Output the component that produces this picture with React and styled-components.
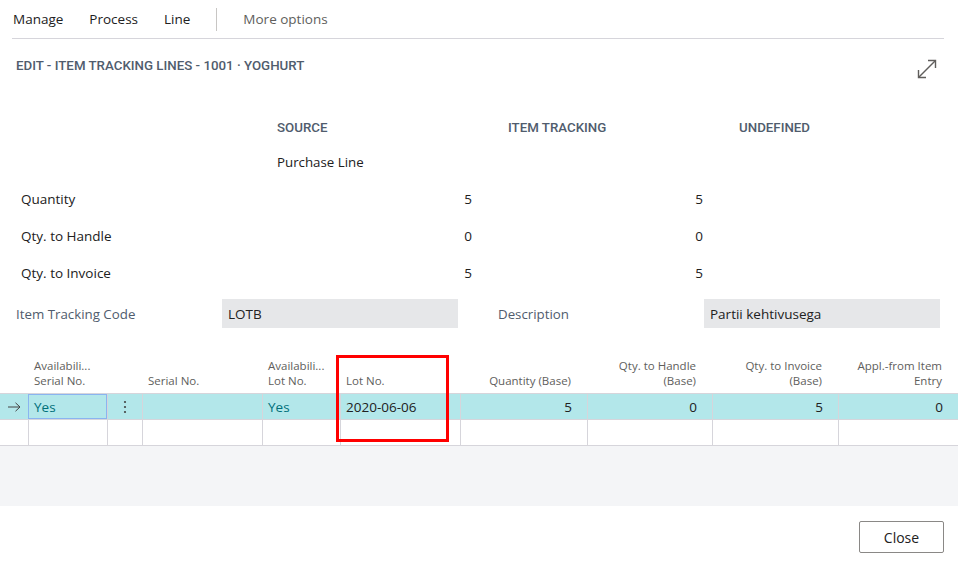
import styled, { createGlobalStyle } from 'styled-components';

const GlobalStyle = createGlobalStyle`
  html, body {
    margin: 0;
    padding: 0;
    background: #ffffff;
  }
  body {
    font-family: 'Open Sans', 'Noto Sans', Arial, sans-serif;
    color: #212121;
  }
`;

const columns = [
  { key: 'arrow', width: 28 },
  { key: 'availSerial', width: 79, title: ['Availabili...', 'Serial No.'] },
  { key: 'menu', width: 35 },
  { key: 'serial', width: 120, title: ['Serial No.'] },
  { key: 'availLot', width: 78, title: ['Availabili...', 'Lot No.'] },
  { key: 'lot', width: 120, title: ['Lot No.'] },
  { key: 'qty', width: 127, title: ['Quantity (Base)'], right: true },
  { key: 'handle', width: 125, title: ['Qty. to Handle', '(Base)'], right: true },
  { key: 'invoice', width: 126, title: ['Qty. to Invoice', '(Base)'], right: true },
  { key: 'appl', width: 120, title: ['Appl.-from Item', 'Entry'], right: true },
];

const gridTemplate = columns.map(c => `${c.width}px`).join(' ');

const rowData = {
  availSerial: 'Yes',
  serial: '',
  availLot: 'Yes',
  lot: '2020-06-06',
  qty: '5',
  handle: '0',
  invoice: '5',
  appl: '0',
};

export default function App() {
  return (
    <Page>
      <GlobalStyle />
      <Toolbar>
        <ToolItem>Manage</ToolItem>
        <ToolItem>Process</ToolItem>
        <ToolItem>Line</ToolItem>
        <ToolSeparator />
        <ToolItem $muted>More options</ToolItem>
      </Toolbar>

      <TitleBar>
        <Caption>Edit - Item Tracking Lines - 1001 · Yoghurt</Caption>
        <ExpandButton aria-label="Expand">
          <svg width="24" height="24" viewBox="0 0 24 24" fill="none" stroke="#605e5c" strokeWidth="1.4">
            <line x1="3.5" y1="20.5" x2="20.5" y2="3.5" />
            <polyline points="13,3.5 20.5,3.5 20.5,11" />
            <polyline points="3.5,13 3.5,20.5 11,20.5" />
          </svg>
        </ExpandButton>
      </TitleBar>

      <Summary>
        <SummaryRow $height={34}>
          <span />
          <GroupHead>Source</GroupHead>
          <GroupHead>Item Tracking</GroupHead>
          <GroupHead>Undefined</GroupHead>
        </SummaryRow>
        <SummaryRow $height={37}>
          <span />
          <SourceText>Purchase Line</SourceText>
          <span />
          <span />
        </SummaryRow>
        <SummaryRow $height={37}>
          <RowLabel>Quantity</RowLabel>
          <Amount>5</Amount>
          <Amount>5</Amount>
          <span />
        </SummaryRow>
        <SummaryRow $height={37}>
          <RowLabel>Qty. to Handle</RowLabel>
          <Amount>0</Amount>
          <Amount>0</Amount>
          <span />
        </SummaryRow>
        <SummaryRow $height={20}>
          <RowLabel>Qty. to Invoice</RowLabel>
          <Amount>5</Amount>
          <Amount>5</Amount>
          <span />
        </SummaryRow>
      </Summary>

      <FieldRow>
        <FieldLabel>Item Tracking Code</FieldLabel>
        <FieldValue>LOTB</FieldValue>
        <span />
        <FieldLabel>Description</FieldLabel>
        <FieldValue>Partii kehtivusega</FieldValue>
      </FieldRow>

      <GridWrap>
        <HeaderRow>
          {columns.map(c => (
            <HeadCell key={c.key} $right={c.right}>
              {c.title && c.title.map(t => <HeadLine key={t}>{t}</HeadLine>)}
            </HeadCell>
          ))}
        </HeaderRow>
        <BodyRow $selected>
          {columns.map((c, i) => {
            if (c.key === 'arrow') {
              return (
                <Cell key={c.key} $first>
                  <svg width="14" height="10" viewBox="0 0 14 10" fill="none" stroke="#444" strokeWidth="1">
                    <line x1="1" y1="5" x2="13" y2="5" />
                    <polyline points="8.5,0.8 13,5 8.5,9.2" />
                  </svg>
                </Cell>
              );
            }
            if (c.key === 'menu') {
              return (
                <Cell key={c.key} $center>
                  <svg width="4" height="14" viewBox="0 0 4 14" fill="#444">
                    <circle cx="2" cy="2" r="1.1" />
                    <circle cx="2" cy="7" r="1.1" />
                    <circle cx="2" cy="12" r="1.1" />
                  </svg>
                </Cell>
              );
            }
            const v = rowData[c.key];
            const link = v === 'Yes';
            return (
              <Cell key={c.key} $right={c.right} $focus={i === 1} $link={link}>
                {v}
              </Cell>
            );
          })}
        </BodyRow>
        <BodyRow>
          {columns.map((c, i) => (
            <Cell key={c.key} $first={i === 0} />
          ))}
        </BodyRow>
        <Highlight />
      </GridWrap>

      <EmptyArea />

      <Footer>
        <CloseButton>Close</CloseButton>
      </Footer>
    </Page>
  );
}

const Page = styled.div`
  width: 958px;
  height: 561px;
  overflow: hidden;
  font-size: 14px;
`;

const Toolbar = styled.div`
  height: 38px;
  margin: 0 14px 0 12px;
  padding-left: 1px;
  display: flex;
  align-items: center;
  gap: 26px;
  border-bottom: 1px solid #d6d5db;
`;

const ToolItem = styled.span`
  font-size: 13.5px;
  color: ${p => (p.$muted ? '#605e5c' : '#212121')};
  white-space: nowrap;
`;

const ToolSeparator = styled.span`
  width: 1px;
  height: 23px;
  background: #c8c6c4;
`;

const TitleBar = styled.div`
  height: 79px;
  display: flex;
  justify-content: space-between;
  align-items: flex-start;
  padding: 17px 19px 0 16px;
  box-sizing: border-box;
`;

const Caption = styled.h1`
  margin: 0;
  font-family: Roboto, 'Liberation Sans', sans-serif;
  font-size: 13.3px;
  line-height: 20px;
  font-weight: 500;
  text-transform: uppercase;
  color: #505c6d;
`;

const ExpandButton = styled.button`
  background: none;
  border: none;
  padding: 0;
  margin-top: 1px;
  width: 24px;
  height: 24px;
  cursor: pointer;
`;

const Summary = styled.div`
  padding-left: 21px;
`;

const SummaryRow = styled.div`
  display: grid;
  grid-template-columns: 225px 231px 231px 231px;
  height: ${p => p.$height}px;
  align-items: start;
  line-height: 20px;
`;

const GroupHead = styled.div`
  padding-left: 31px;
  font-family: Roboto, 'Liberation Sans', sans-serif;
  font-size: 13.3px;
  font-weight: 500;
  text-transform: uppercase;
  color: #505c6d;
`;

const SourceText = styled.div`
  padding-left: 31px;
  font-size: 13.3px;
`;

const RowLabel = styled.div`
  font-size: 13.5px;
  color: #212121;
`;

const Amount = styled.div`
  text-align: right;
  padding-right: 5px;
  font-size: 13.5px;
`;

const FieldRow = styled.div`
  margin-top: 16px;
  padding-left: 16px;
  display: grid;
  grid-template-columns: 206px 236px 40px 206px 236px;
  height: 29px;
`;

const FieldLabel = styled.div`
  display: flex;
  align-items: center;
  font-size: 13.3px;
  color: #505c6d;
`;

const FieldValue = styled.div`
  display: flex;
  align-items: center;
  padding-left: 6px;
  background: #e6e7e9;
  font-size: 13.5px;
  color: #212121;
`;

const GridWrap = styled.div`
  position: relative;
  margin-top: 17px;
`;

const HeaderRow = styled.div`
  display: grid;
  grid-template-columns: ${gridTemplate};
  height: 49px;
  border-bottom: 1px solid #d6d5db;
  box-sizing: border-box;
`;

const HeadCell = styled.div`
  display: flex;
  flex-direction: column;
  justify-content: flex-end;
  align-items: ${p => (p.$right ? 'flex-end' : 'flex-start')};
  padding: 0 ${p => (p.$right ? '16px' : '6px')} 5px 6px;
  font-size: 11.5px;
  color: #605e5c;
  white-space: nowrap;
  overflow: hidden;
`;

const HeadLine = styled.div`
  height: 15px;
  line-height: 15px;
`;

const BodyRow = styled.div`
  display: grid;
  grid-template-columns: ${gridTemplate};
  height: 26px;
  background: ${p => (p.$selected ? '#b3e7ea' : '#ffffff')};
  border-bottom: 1px solid #d6d5db;
  box-sizing: border-box;
`;

const Cell = styled.div`
  display: flex;
  align-items: center;
  justify-content: ${p => (p.$right ? 'flex-end' : p.$center ? 'center' : 'flex-start')};
  padding: 0 ${p => (p.$right ? '15px' : '6px')} 0 ${p => (p.$first ? '7px' : '5px')};
  border-left: ${p => (p.$first ? 'none' : '1px solid #d6d5db')};
  font-size: 13.5px;
  color: ${p => (p.$link ? '#00707a' : '#212121')};
  box-sizing: border-box;
  ${p => p.$focus && `
    outline: 1px solid #8ab4f0;
    outline-offset: -1px;
  `}
`;

const Highlight = styled.div`
  position: absolute;
  left: 336px;
  top: 10px;
  width: 113px;
  height: 87px;
  border: 3px solid #ff0000;
  box-sizing: border-box;
  pointer-events: none;
`;

const EmptyArea = styled.div`
  height: 60px;
  background: #f4f5f7;
`;

const Footer = styled.div`
  display: flex;
  justify-content: flex-end;
  padding: 15px 14px 0 0;
`;

const CloseButton = styled.button`
  width: 85px;
  height: 32px;
  background: #ffffff;
  border: 1px solid #8a8886;
  border-radius: 2px;
  font-family: 'Open Sans', 'Noto Sans', Arial, sans-serif;
  font-size: 14px;
  color: #212121;
  cursor: pointer;
`;
